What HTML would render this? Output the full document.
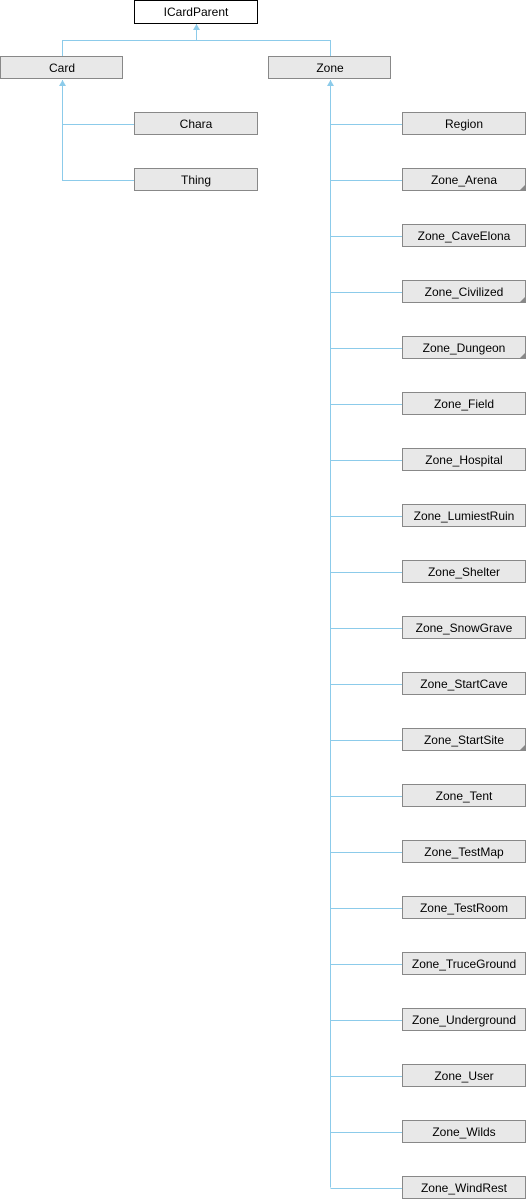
<!DOCTYPE html>
<html><head><style>body{margin:0;background:#fff}svg{display:block}</style></head><body>
<svg width="526" height="1200" xmlns="http://www.w3.org/2000/svg" font-family="Liberation Sans, sans-serif" font-size="12">
<defs>
<g id="b"><path d="M330.5 12.5H402" stroke="#8ccbea" fill="none"/><rect x="402.5" y="0.5" width="123" height="22" fill="#e8e8e8" stroke="#888"/></g>
<path id="t" d="M525 17V23H519Z" fill="#888"/>
</defs>
<g stroke="#8ccbea" fill="none" stroke-width="1">
<path d="M196.5 24V40.5M62.5 56V40.5H330.5V56"/>
<path d="M62.5 80V180.5H134M62.5 124.5H134"/>
<path d="M330.5 80V1187.5"/>
</g>
<g fill="#8ccbea">
<path d="M196.5 24L193 30H200Z"/><path d="M62.5 80L59 86H66Z"/><path d="M330.5 80L327 86H334Z"/>
</g>
<rect x="134.5" y="0.5" width="123" height="23" fill="#fff" stroke="#000"/>
<text x="196" y="16" text-anchor="middle">ICardParent</text>
<g fill="#e8e8e8" stroke="#888">
<rect x="0.5" y="56.5" width="122" height="22"/>
<rect x="268.5" y="56.5" width="122" height="22"/>
<rect x="134.5" y="112.5" width="123" height="22"/>
<rect x="134.5" y="168.5" width="123" height="22"/>
</g>
<text x="62" y="72" text-anchor="middle">Card</text>
<text x="330" y="72" text-anchor="middle">Zone</text>
<text x="196" y="128" text-anchor="middle">Chara</text>
<text x="196" y="184" text-anchor="middle">Thing</text>
<g text-anchor="middle">
<g transform="translate(0,112)"><use href="#b"/><text x="464" y="16">Region</text></g>
<g transform="translate(0,168)"><use href="#b"/><use href="#t"/><text x="464" y="16">Zone_Arena</text></g>
<g transform="translate(0,224)"><use href="#b"/><text x="464" y="16">Zone_CaveElona</text></g>
<g transform="translate(0,280)"><use href="#b"/><use href="#t"/><text x="464" y="16">Zone_Civilized</text></g>
<g transform="translate(0,336)"><use href="#b"/><use href="#t"/><text x="464" y="16">Zone_Dungeon</text></g>
<g transform="translate(0,392)"><use href="#b"/><text x="464" y="16">Zone_Field</text></g>
<g transform="translate(0,448)"><use href="#b"/><text x="464" y="16">Zone_Hospital</text></g>
<g transform="translate(0,504)"><use href="#b"/><text x="464" y="16">Zone_LumiestRuin</text></g>
<g transform="translate(0,560)"><use href="#b"/><text x="464" y="16">Zone_Shelter</text></g>
<g transform="translate(0,616)"><use href="#b"/><text x="464" y="16">Zone_SnowGrave</text></g>
<g transform="translate(0,672)"><use href="#b"/><text x="464" y="16">Zone_StartCave</text></g>
<g transform="translate(0,728)"><use href="#b"/><use href="#t"/><text x="464" y="16">Zone_StartSite</text></g>
<g transform="translate(0,784)"><use href="#b"/><text x="464" y="16">Zone_Tent</text></g>
<g transform="translate(0,840)"><use href="#b"/><text x="464" y="16">Zone_TestMap</text></g>
<g transform="translate(0,896)"><use href="#b"/><text x="464" y="16">Zone_TestRoom</text></g>
<g transform="translate(0,952)"><use href="#b"/><text x="464" y="16">Zone_TruceGround</text></g>
<g transform="translate(0,1008)"><use href="#b"/><text x="464" y="16">Zone_Underground</text></g>
<g transform="translate(0,1064)"><use href="#b"/><text x="464" y="16">Zone_User</text></g>
<g transform="translate(0,1120)"><use href="#b"/><text x="464" y="16">Zone_Wilds</text></g>
<g transform="translate(0,1176)"><use href="#b"/><text x="464" y="16">Zone_WindRest</text></g>
</g>
</svg>
</body></html>
